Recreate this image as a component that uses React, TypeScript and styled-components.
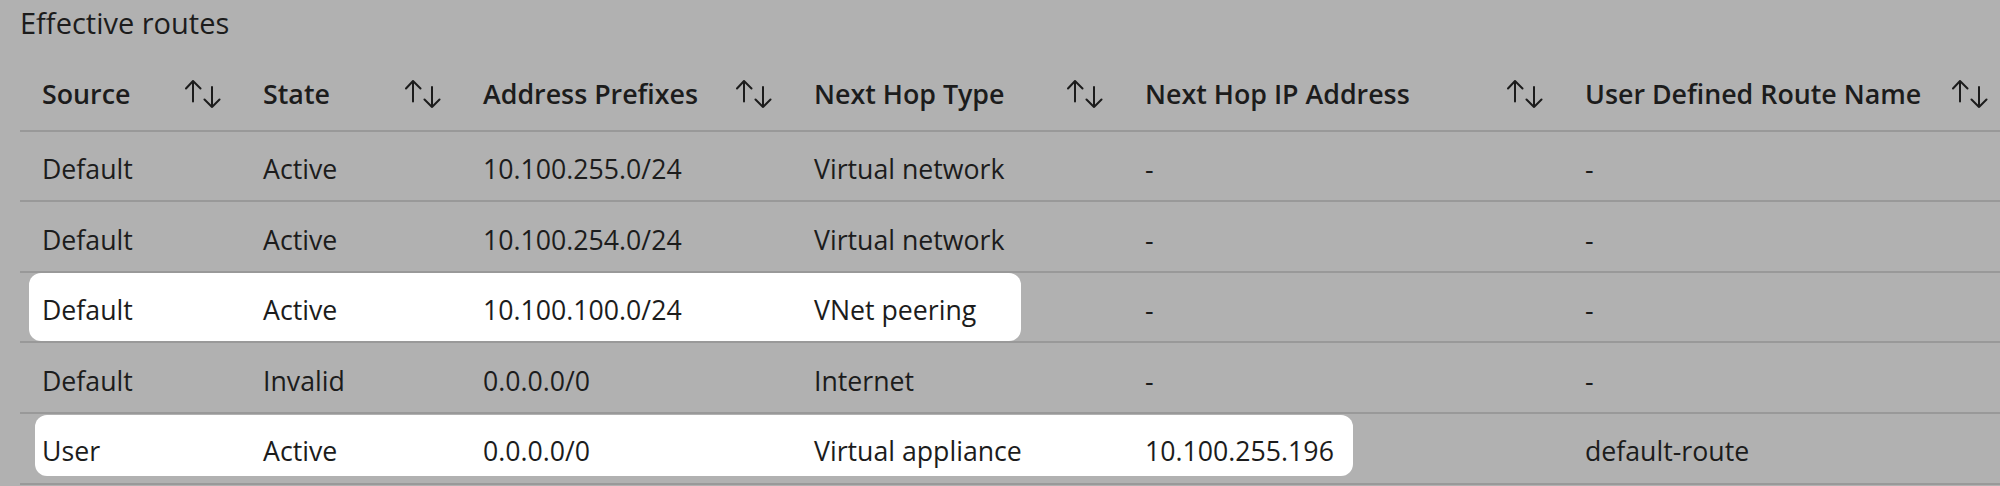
import React from 'react'
import styled, { createGlobalStyle } from 'styled-components'

const GlobalStyle = createGlobalStyle`
  html, body {
    margin: 0;
    padding: 0;
    background: #b1b1b1;
    overflow: hidden;
  }
  body {
    font-family: "Open Sans", "Noto Sans", "Liberation Sans", sans-serif;
    color: #1c1c1c;
  }
`

const COLUMNS = '221px 220px 331px 331px 440px 445px'

const Page = styled.div`
  width: 2000px;
  height: 486px;
  padding-left: 20px;
  box-sizing: border-box;
  overflow: hidden;
`

const Title = styled.h1`
  margin: 3px 0 17px;
  font-size: 29px;
  line-height: 40px;
  font-weight: 400;
  color: #1c1c1c;
`

const Table = styled.div`
  display: flex;
  flex-direction: column;
  width: 1988px;
`

const HeaderRow = styled.div`
  display: grid;
  grid-template-columns: ${COLUMNS};
  height: 71.7px;
  box-sizing: border-box;
  border-bottom: 2px solid #999999;
  padding-bottom: 3px;
`

const HeaderCell = styled.div`
  display: flex;
  align-items: center;
  justify-content: space-between;
  padding: 0 20px 0 22px;
  font-size: 26.8px;
  font-weight: 600;
  white-space: nowrap;
`

const SortIcon = styled.svg`
  width: 36px;
  height: 28px;
  flex: none;
  margin-top: 2px;
`

const Row = styled.div`
  position: relative;
  display: grid;
  grid-template-columns: ${COLUMNS};
  height: 70.6px;
  box-sizing: border-box;
  border-bottom: 2px solid #999999;
`

const Cell = styled.div`
  position: relative;
  z-index: 1;
  display: flex;
  align-items: center;
  padding: 5px 20px 0 22px;
  font-size: 26.7px;
  white-space: nowrap;
  color: #1c1c1c;
`

const Highlight = styled.div<{ $left: number; $width: number; $top: number; $height: number }>`
  position: absolute;
  z-index: 0;
  left: ${p => p.$left}px;
  width: ${p => p.$width}px;
  top: ${p => p.$top}px;
  height: ${p => p.$height}px;
  background: #ffffff;
  border-radius: 12px;
`

const headers = [
  'Source',
  'State',
  'Address Prefixes',
  'Next Hop Type',
  'Next Hop IP Address',
  'User Defined Route Name',
]

interface Route {
  cells: string[]
  mark?: { left: number; width: number; top: number; height: number }
}

const routes: Route[] = [
  { cells: ['Default', 'Active', '10.100.255.0/24', 'Virtual network', '-', '-'] },
  { cells: ['Default', 'Active', '10.100.254.0/24', 'Virtual network', '-', '-'] },
  {
    cells: ['Default', 'Active', '10.100.100.0/24', 'VNet peering', '-', '-'],
    mark: { left: 9, width: 992, top: 0, height: 68 },
  },
  { cells: ['Default', 'Invalid', '0.0.0.0/0', 'Internet', '-', '-'] },
  {
    cells: ['User', 'Active', '0.0.0.0/0', 'Virtual appliance', '10.100.255.196', 'default-route'],
    mark: { left: 15, width: 1318, top: 1, height: 61 },
  },
]

function Sort() {
  return (
    <SortIcon viewBox="0 0 36 28" fill="none" stroke="#1c1c1c" strokeWidth="2" strokeLinecap="round" strokeLinejoin="round">
      <path d="M8 1v20.5M1 8.5L8 1l7.5 7.5" />
      <path d="M27 7v20M19.5 19.5L27 27l7.5-7.5" />
    </SortIcon>
  )
}

export default function App() {
  return (
    <>
      <GlobalStyle />
      <Page>
        <Title>Effective routes</Title>
        <Table>
          <HeaderRow>
            {headers.map(h => (
              <HeaderCell key={h}>
                <span>{h}</span>
                <Sort />
              </HeaderCell>
            ))}
          </HeaderRow>
          {routes.map((r, i) => (
            <Row key={i}>
              {r.mark && (
                <Highlight $left={r.mark.left} $width={r.mark.width} $top={r.mark.top} $height={r.mark.height} />
              )}
              {r.cells.map((c, j) => (
                <Cell key={j}>{c}</Cell>
              ))}
            </Row>
          ))}
        </Table>
      </Page>
    </>
  )
}
